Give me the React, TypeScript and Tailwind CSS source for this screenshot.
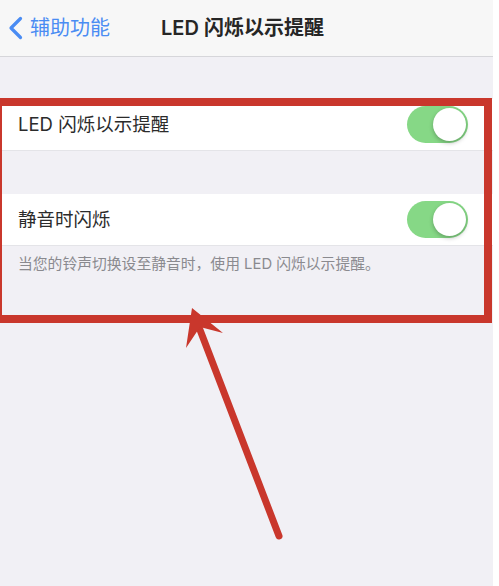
import React from 'react';

const font = { fontFamily: '"Inter", "Noto Sans CJK SC", sans-serif' };

const Toggle: React.FC = () => (
  <div className="relative h-[37px] w-[61px] rounded-full bg-[#86d886]">
    <div className="absolute right-[2px] top-[2px] h-[33px] w-[33px] rounded-full bg-white shadow-[0_2px_4px_rgba(0,0,0,0.25)]" />
  </div>
);

const SettingRow: React.FC<{ label: string }> = ({ label }) => (
  <div className="flex h-[52px] items-center justify-between border-b border-[#e4e4e8] bg-white pl-[18px] pr-[25px]">
    <span className="text-[18.5px] text-[#2b2b2b]">{label}</span>
    <Toggle />
  </div>
);

export default function App() {
  return (
    <div className="relative flex h-[586px] w-[499px] overflow-hidden bg-white" style={font}>
      <div className="flex w-[493px] flex-col bg-[#f1f0f5]">
        {/* navigation bar */}
        <div className="relative flex h-[57px] items-center justify-center border-b border-[#d6d6da] bg-[#f7f7f7]">
          <div className="absolute left-[8px] top-0 flex h-full items-center gap-[7px] text-[#4a8cf3]">
            <svg width="15" height="24" viewBox="0 0 15 24" fill="none">
              <path d="M12.5 2.5L3 12l9.5 9.5" stroke="currentColor" strokeWidth="3.2" strokeLinecap="round" strokeLinejoin="round" />
            </svg>
            <span className="text-[20px]">辅助功能</span>
          </div>
          <span className="-ml-[8px] text-[20px] font-semibold text-[#262626]">LED 闪烁以示提醒</span>
        </div>

        <div className="h-[42px]" />
        <SettingRow label="LED 闪烁以示提醒" />
        <div className="h-[43px]" />
        <SettingRow label="静音时闪烁" />
        <p className="pl-[18px] pt-[7px] text-[14.8px] text-[#8a8a8f]">
          当您的铃声切换设至静音时，使用 LED 闪烁以示提醒。
        </p>
      </div>

      {/* red highlight box */}
      <div className="absolute left-[-6px] top-[98px] h-[225px] w-[498px] border-[8px] border-[#c9372c]" />

      {/* arrow pointing at the box */}
      <svg className="absolute left-0 top-0" width="499" height="586" viewBox="0 0 499 586">
        <line x1="279" y1="536" x2="197" y2="322" stroke="#c9372c" strokeWidth="7" strokeLinecap="round" />
        <polygon points="192,308 223,333 200,327 186,348" fill="#c9372c" />
      </svg>
    </div>
  );
}
